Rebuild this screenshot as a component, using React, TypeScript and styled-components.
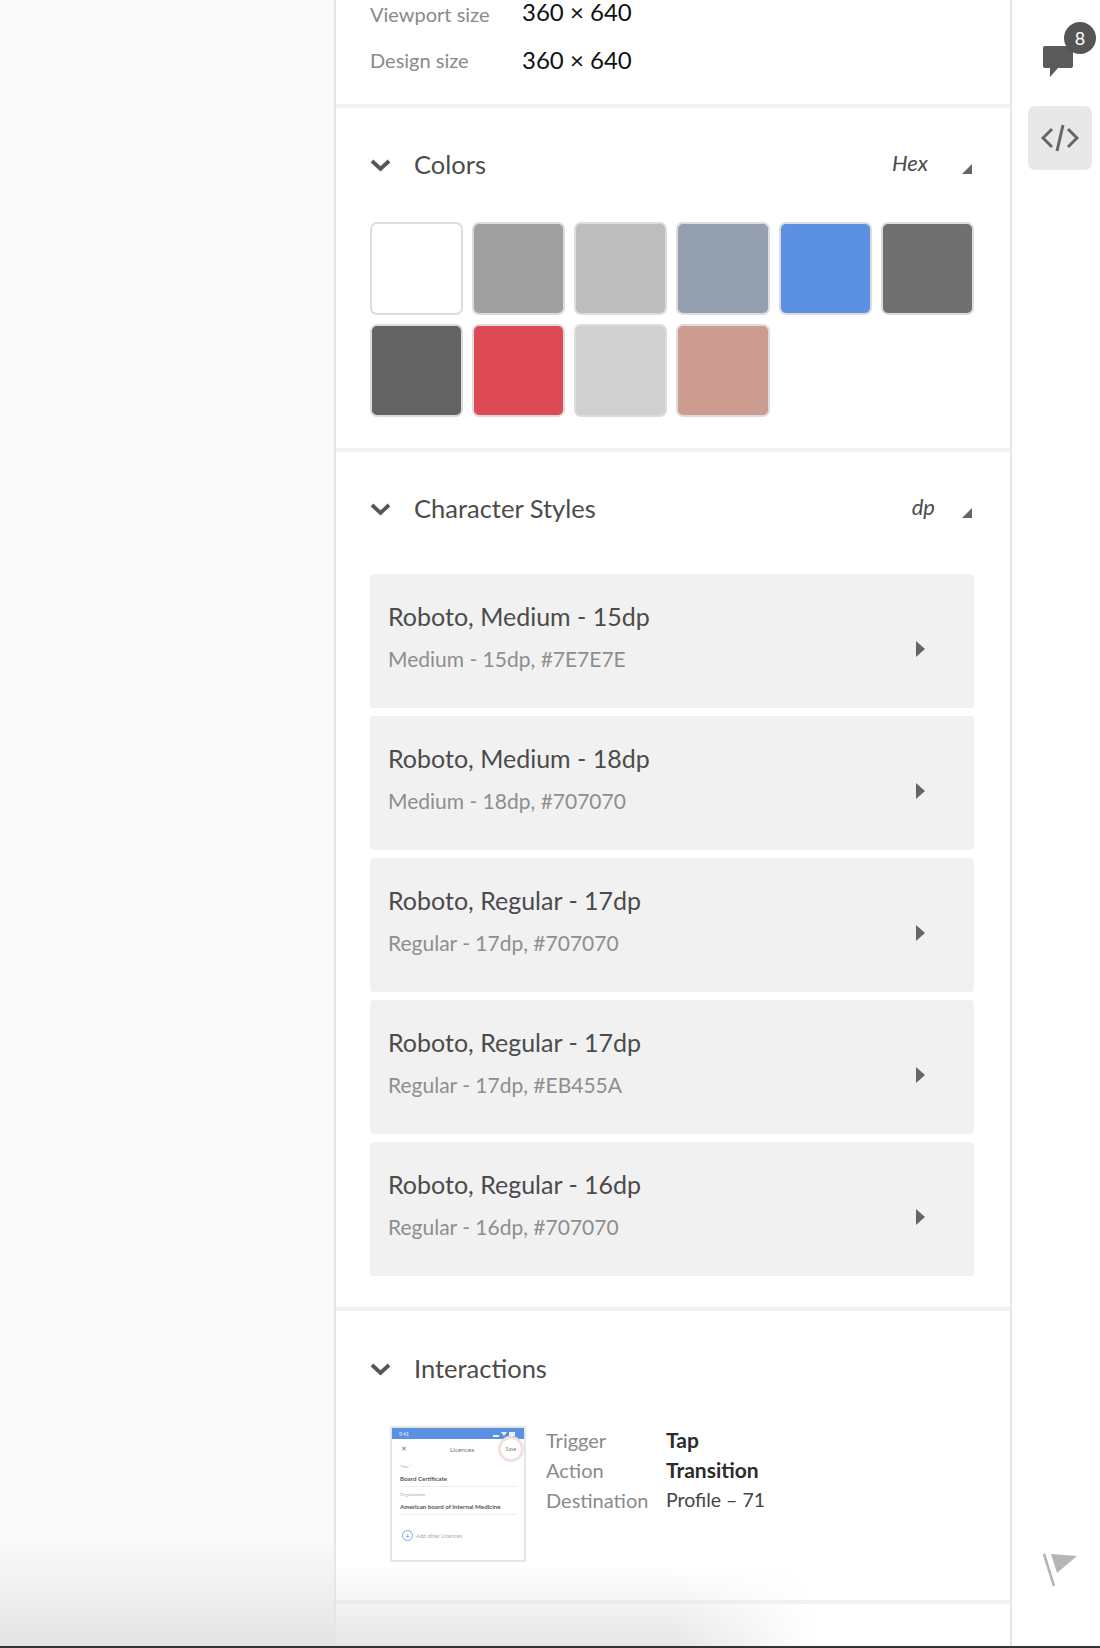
import React from "react";
import styled, { createGlobalStyle } from "styled-components";

const GlobalStyle = createGlobalStyle`
  html, body {
    margin: 0;
    padding: 0;
    background: #fff;
  }
  * {
    box-sizing: border-box;
  }
`;

const FONT = `"Lato", "Open Sans", sans-serif`;

const Page = styled.div`
  position: relative;
  display: flex;
  width: 1100px;
  height: 1648px;
  overflow: hidden;
  font-family: ${FONT};
  border-bottom: 2px solid #333;
`;

const LeftPane = styled.div`
  width: 334px;
  flex-shrink: 0;
  background: linear-gradient(to bottom, #fafafa 0, #fafafa 1540px, #e4e4e4 1646px);
`;

const Inspector = styled.main`
  width: 678px;
  flex-shrink: 0;
  background: #fff;
  border-left: 2px solid #e6e6e6;
  border-right: 2px solid #e6e6e6;
`;

const Rail = styled.aside`
  flex: 1;
  display: flex;
  flex-direction: column;
  align-items: center;
  padding: 22px 0 0 8px;
  background: #fff;
`;

const Section = styled.section<{ $height: number; $top?: number }>`
  height: ${(p) => p.$height}px;
  padding: ${(p) => p.$top ?? 0}px 36px 0 34px;
  border-bottom: 4px solid #f2f2f2;
`;

const SizeGrid = styled.dl`
  display: grid;
  grid-template-columns: 152px 1fr;
  row-gap: 22px;
  margin: 0;
`;

const SizeLabel = styled.dt<{ $pad: number }>`
  font-size: 20px;
  line-height: 24px;
  color: #8a8a8a;
  padding-top: ${(p) => p.$pad}px;
`;

const SizeValue = styled.dd`
  margin: 0;
  font-size: 24px;
  line-height: 24px;
  color: #111;
`;

const SectionHeader = styled.header`
  display: flex;
  align-items: center;
  height: 32px;
`;

const Chevron = styled.svg`
  width: 21px;
  height: 14px;
  margin-right: 23px;
  flex-shrink: 0;
`;

const SectionTitle = styled.h2`
  flex: 1;
  margin: 0 0 2px;
  font-size: 25.5px;
  font-weight: 400;
  color: #4b4b4b;
`;

const UnitPicker = styled.div`
  display: flex;
  align-items: center;
  font-size: 22px;
  font-style: italic;
  color: #4b4b4b;
`;

const UnitLabel = styled.span`
  margin-bottom: 6px;
`;

const CornerArrow = styled.svg<{ $gap: number }>`
  width: 10px;
  height: 10px;
  margin: 7px 2px 0 ${(p) => p.$gap}px;
`;

const SwatchGrid = styled.div`
  display: grid;
  grid-template-columns: repeat(6, 1fr);
  grid-auto-rows: 93px;
  gap: 9px;
  margin-top: 41px;
`;

const Swatch = styled.div<{ $color: string }>`
  border: 2px solid #dcdcdc;
  border-radius: 7px;
  background: ${(p) => p.$color};
`;

const StyleList = styled.div`
  display: flex;
  flex-direction: column;
  gap: 8px;
  margin-top: 49px;
`;

const StyleCard = styled.div`
  display: flex;
  align-items: center;
  height: 134px;
  padding: 0 49px 0 18px;
  background: #f1f1f1;
  border-radius: 4px;
`;

const StyleText = styled.div`
  flex: 1;
  padding-bottom: 9px;
`;

const StyleName = styled.div`
  font-size: 25px;
  line-height: 34px;
  color: #4b4b4b;
`;

const StyleMeta = styled.div`
  margin-top: 11px;
  font-size: 21px;
  line-height: 30px;
  color: #8e8e8e;
`;

const CardArrow = styled.svg`
  width: 9px;
  height: 16px;
  margin-top: 16px;
`;

const InteractionRow = styled.div`
  display: flex;
  margin-top: 41px;
  padding-left: 20px;
`;

const Thumb = styled.div`
  width: 136px;
  height: 136px;
  flex-shrink: 0;
  background: #fff;
  border: 2px solid #e6e6e6;
  color: #555;
`;

const ThumbBar = styled.div`
  display: flex;
  align-items: center;
  justify-content: space-between;
  height: 11px;
  padding: 0 9px 0 7px;
  background: #5b90e3;
  font-size: 5px;
  color: #e8f0fc;
`;

const ThumbStatus = styled.svg`
  width: 22px;
  height: 6px;
`;

const ThumbNav = styled.div`
  position: relative;
  display: flex;
  align-items: center;
  height: 20px;
  padding-left: 9px;
  font-size: 6.5px;
  color: #777;
`;

const ThumbTitle = styled.span`
  margin-left: 43px;
`;

const ThumbSave = styled.span`
  position: absolute;
  right: 0;
  top: -3px;
  display: flex;
  align-items: center;
  justify-content: center;
  width: 26px;
  height: 26px;
  border: 3px solid #f0e2df;
  border-radius: 50%;
  font-size: 5px;
`;

const ThumbField = styled.div`
  margin: 5px 8px 0;
  padding-bottom: 3px;
  border-bottom: 1px solid #eee;
  font-size: 6.2px;
  font-weight: 700;
  line-height: 8px;
  color: #555;
`;

const ThumbHint = styled.div`
  margin-bottom: 5px;
  font-size: 4.5px;
  font-weight: 400;
  line-height: 6px;
  color: #aaa;
`;

const ThumbAdd = styled.div`
  display: flex;
  align-items: center;
  gap: 3px;
  margin: 15px 10px 0;
  font-size: 5.5px;
  color: #aaa;
`;

const ThumbPlus = styled.span`
  display: flex;
  align-items: center;
  justify-content: center;
  width: 11px;
  height: 11px;
  border: 1px solid #7ea6e8;
  border-radius: 50%;
  color: #5b90e3;
  font-size: 8px;
  line-height: 1;
`;

const FactGrid = styled.div`
  display: grid;
  grid-template-columns: 120px auto;
  grid-auto-rows: 30px;
  align-content: start;
  margin: -1px 0 0 20px;
  font-size: 20px;
  line-height: 30px;
`;

const FactLabel = styled.span`
  color: #8a8a8a;
`;

const FactValue = styled.span<{ $bold?: boolean }>`
  color: ${(p) => (p.$bold ? "#2c2c2c" : "#444")};
  font-size: ${(p) => (p.$bold ? 21 : 19.5)}px;
  font-weight: ${(p) => (p.$bold ? 700 : 400)};
`;

const CommentButton = styled.div`
  position: relative;
  width: 50px;
  height: 56px;
`;

const CommentIcon = styled.svg`
  position: absolute;
  left: 8px;
  top: 24px;
  width: 32px;
  height: 33px;
`;

const CountBadge = styled.span`
  position: absolute;
  right: -11px;
  top: 0;
  display: flex;
  align-items: center;
  justify-content: center;
  width: 32px;
  height: 32px;
  background: #555;
  border-radius: 50%;
  color: #fff;
  font-size: 18px;
  font-weight: 400;
`;

const CodeButton = styled.div`
  display: flex;
  align-items: center;
  justify-content: center;
  width: 64px;
  height: 64px;
  margin-top: 28px;
  background: #e8e8e8;
  border-radius: 7px;
`;

const FlagIcon = styled.svg`
  width: 34px;
  height: 34px;
  margin-top: 1383px;
`;

const BottomFade = styled.div`
  position: absolute;
  left: 336px;
  bottom: 0;
  width: 480px;
  height: 80px;
  background: linear-gradient(to top, rgba(228, 228, 228, 0.95), rgba(255, 255, 255, 0));
  -webkit-mask-image: linear-gradient(to right, #000 70%, transparent);
  mask-image: linear-gradient(to right, #000 70%, transparent);
  pointer-events: none;
`;

const SWATCHES = [
  "#ffffff",
  "#a0a0a0",
  "#bdbdbd",
  "#949faf",
  "#5b90e3",
  "#707070",
  "#646464",
  "#dd4a55",
  "#d0d0d0",
  "#cc9c90",
];

const CHARACTER_STYLES = [
  { name: "Roboto, Medium - 15dp", meta: "Medium - 15dp, #7E7E7E" },
  { name: "Roboto, Medium - 18dp", meta: "Medium - 18dp, #707070" },
  { name: "Roboto, Regular - 17dp", meta: "Regular - 17dp, #707070" },
  { name: "Roboto, Regular - 17dp", meta: "Regular - 17dp, #EB455A" },
  { name: "Roboto, Regular - 16dp", meta: "Regular - 16dp, #707070" },
];

const SectionChevron = () => (
  <Chevron viewBox="0 0 21 14">
    <path d="M2 3l8.5 8L19 3" fill="none" stroke="#555" strokeWidth="3.8" />
  </Chevron>
);

const UnitArrow = ({ gap }: { gap: number }) => (
  <CornerArrow viewBox="0 0 10 10" $gap={gap}>
    <path d="M10 0v10H0z" fill="#666" />
  </CornerArrow>
);

const App = () => {
  return (
    <Page>
      <GlobalStyle />
      <LeftPane />
      <Inspector>
        <Section $height={108}>
          <SizeGrid>
            <SizeLabel $pad={2}>Viewport size</SizeLabel>
            <SizeValue>360 × 640</SizeValue>
            <SizeLabel $pad={0}>Design size</SizeLabel>
            <SizeValue>360 × 640</SizeValue>
          </SizeGrid>
        </Section>

        <Section $height={344} $top={41}>
          <SectionHeader>
            <SectionChevron />
            <SectionTitle>Colors</SectionTitle>
            <UnitPicker>
              <UnitLabel>Hex</UnitLabel>
              <UnitArrow gap={34} />
            </UnitPicker>
          </SectionHeader>
          <SwatchGrid>
            {SWATCHES.map((color) => (
              <Swatch key={color} $color={color} />
            ))}
          </SwatchGrid>
        </Section>

        <Section $height={859} $top={41}>
          <SectionHeader>
            <SectionChevron />
            <SectionTitle>Character Styles</SectionTitle>
            <UnitPicker>
              <UnitLabel>dp</UnitLabel>
              <UnitArrow gap={27} />
            </UnitPicker>
          </SectionHeader>
          <StyleList>
            {CHARACTER_STYLES.map((item) => (
              <StyleCard key={item.meta}>
                <StyleText>
                  <StyleName>{item.name}</StyleName>
                  <StyleMeta>{item.meta}</StyleMeta>
                </StyleText>
                <CardArrow viewBox="0 0 9 16">
                  <path d="M0 0l9 8-9 8z" fill="#666" />
                </CardArrow>
              </StyleCard>
            ))}
          </StyleList>
        </Section>

        <Section $height={293} $top={42}>
          <SectionHeader>
            <SectionChevron />
            <SectionTitle>Interactions</SectionTitle>
          </SectionHeader>
          <InteractionRow>
            <Thumb>
              <ThumbBar>
                <span>9:41</span>
                <ThumbStatus viewBox="0 0 22 6">
                  <path d="M0 4h6v2H0zM8 1l3 4 3-4zM16 1h6v4h-6z" fill="#e8f0fc" />
                </ThumbStatus>
              </ThumbBar>
              <ThumbNav>
                <span>✕</span>
                <ThumbTitle>Licences</ThumbTitle>
                <ThumbSave>Save</ThumbSave>
              </ThumbNav>
              <ThumbField>
                <ThumbHint>Title *</ThumbHint>
                Board Certificate
              </ThumbField>
              <ThumbField>
                <ThumbHint>Organisation</ThumbHint>
                American board of Internal Medicine
              </ThumbField>
              <ThumbAdd>
                <ThumbPlus>+</ThumbPlus>
                Add other Licences
              </ThumbAdd>
            </Thumb>
            <FactGrid>
              <FactLabel>Trigger</FactLabel>
              <FactValue $bold>Tap</FactValue>
              <FactLabel>Action</FactLabel>
              <FactValue $bold>Transition</FactValue>
              <FactLabel>Destination</FactLabel>
              <FactValue>Profile – 71</FactValue>
            </FactGrid>
          </InteractionRow>
        </Section>
      </Inspector>
      <Rail>
        <CommentButton>
          <CommentIcon viewBox="0 0 32 33">
            <path d="M2 0h26a2 2 0 0 1 2 2v18a2 2 0 0 1-2 2H15l-8 9v-9H2a2 2 0 0 1-2-2V2a2 2 0 0 1 2-2z" fill="#5a5a5a" />
          </CommentIcon>
          <CountBadge>8</CountBadge>
        </CommentButton>
        <CodeButton>
          <svg width="38" height="28" viewBox="0 0 38 28">
            <path d="M11 5l-9 9 9 9M27 5l9 9-9 9M22 1l-6 26" fill="none" stroke="#666" strokeWidth="3" />
          </svg>
        </CodeButton>
        <FlagIcon viewBox="0 0 34 34">
          <path d="M1 1l10 32" fill="none" stroke="#b5b5b5" strokeWidth="2.6" />
          <path d="M8 1l26 2-20 17z" fill="#b5b5b5" />
        </FlagIcon>
      </Rail>
      <BottomFade />
    </Page>
  );
};

export default App;
